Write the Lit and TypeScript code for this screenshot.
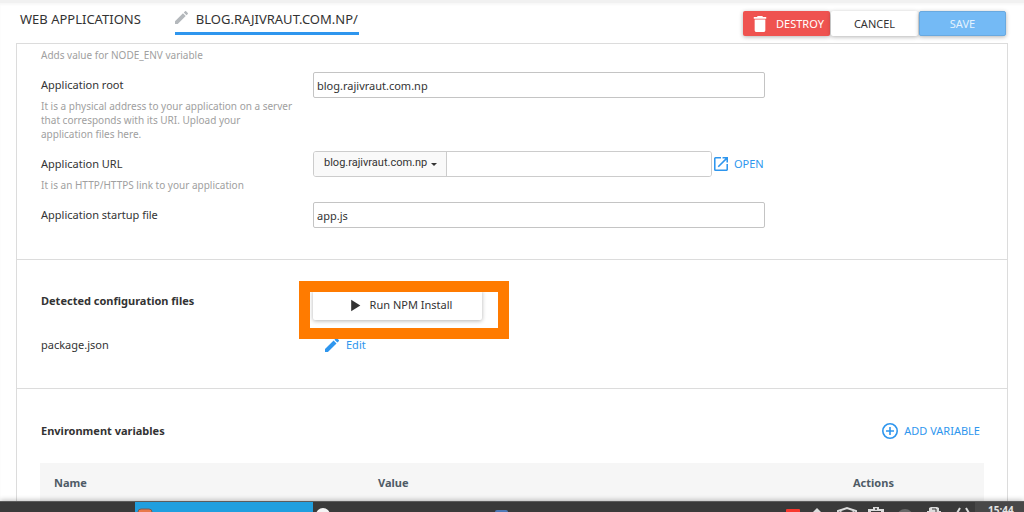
import { LitElement, html, css, svg } from "lit";
import { customElement, state } from "lit/decorators.js";

const PENCIL =
  "M3 17.25V21h3.75L17.81 9.94l-3.75-3.75L3 17.25zM20.71 7.04a1 1 0 0 0 0-1.41l-2.34-2.34a1 1 0 0 0-1.41 0l-1.83 1.83 3.75 3.75 1.83-1.83z";
const TRASH = "M6 19c0 1.1.9 2 2 2h8c1.1 0 2-.9 2-2V7H6v12zM19 4h-3.5l-1-1h-5l-1 1H5v2h14V4z";
const OPEN =
  "M19 19H5V5h7V3H5a2 2 0 0 0-2 2v14a2 2 0 0 0 2 2h14c1.1 0 2-.9 2-2v-7h-2v7zM14 3v2h3.59l-9.83 9.83 1.41 1.41L19 6.41V10h2V3h-7z";
const PLAY = "M8 5v14l11-7z";
const PLUS =
  "M13 7h-2v4H7v2h4v4h2v-4h4v-2h-4V7zm-1-5a10 10 0 1 0 0 20 10 10 0 0 0 0-20zm0 18a8 8 0 1 1 0-16 8 8 0 0 1 0 16z";

const icon = (path: string, cls: string) =>
  html`<svg class="icon ${cls}" viewBox="3 3 18 18" aria-hidden="true"><path d=${path}></path></svg>`;

@customElement("app-taskbar")
export class AppTaskbar extends LitElement {
  static styles = css`
    :host {
      display: flex;
      justify-content: space-between;
      height: 11px;
      overflow: hidden;
      background: #3a3a3a;
      border-top: 1px solid #5c5c5c;
      box-sizing: border-box;
      box-shadow: 0 -1px 5px rgba(0, 0, 0, 0.25);
      position: relative;
      font-family: "Noto Sans", sans-serif;
    }
    .tasks,
    .tray,
    .status {
      display: flex;
      align-items: flex-start;
    }
    .tasks {
      padding-left: 135px;
    }
    .task {
      box-sizing: border-box;
      width: 178px;
      height: 24px;
      padding: 6px 2px 0;
    }
    .active {
      background: #209fdf;
    }
    .glyph {
      display: block;
      width: 16px;
      height: 16px;
      overflow: visible;
    }
    .status {
      gap: 13px;
      padding: 5px 4px 0 0;
    }
    .clock {
      box-sizing: border-box;
      width: 49px;
      padding-left: 13px;
      background: #484848;
      color: #e4e4e4;
      font-size: 10px;
      line-height: 16px;
      font-weight: 700;
    }
  `;

  private glyph(shape: unknown) {
    return html`<svg class="glyph" viewBox="0 0 16 16" aria-hidden="true">${shape}</svg>`;
  }

  render() {
    return html`
      <div class="tasks">
        <div class="task active">
          ${this.glyph(svg`<rect x="1" y="1" width="14" height="14" rx="3" fill="#e8794a" stroke="#7b5a50"></rect>`)}
        </div>
        <div class="task">${this.glyph(svg`<circle cx="8" cy="7" r="7" fill="#f4f4f4"></circle>`)}</div>
        <div class="task">${this.glyph(svg`<rect x="2" y="2" width="13" height="12" rx="2" fill="#4f78b5"></rect>`)}</div>
      </div>
      <div class="tray">
        <div class="status">
          ${this.glyph(svg`<rect x="5" y="2" width="14" height="12" rx="1" fill="#f8382e"></rect>`)}
          ${this.glyph(svg`<path d="M7 1l5 5H2z" fill="#dcdcdc"></path>`)}
          ${this.glyph(svg`<path d="M-1 4l9-3 9 3v5l-9 5-9-5z M1 5l7 3 7-3" fill="none" stroke="#dcdcdc" stroke-width="2"></path>`)}
          ${this.glyph(svg`<path d="M0 2h5V0h6v2h5v11H0z" fill="#dcdcdc"></path><circle cx="8" cy="2" r="1" fill="#3a3a3a"></circle><path d="M3 4.500h10" stroke="#3a3a3a"></path>`)}
          ${this.glyph(svg`<circle cx="8" cy="10" r="8" fill="#686868"></circle>`)}
          ${this.glyph(svg`<path d="M3 4V1l2-1h6l2 1v3h2v8H1V4z" fill="#dcdcdc"></path><path d="M6 2h4v3" stroke="#3a3a3a" fill="none"></path>`)}
          ${this.glyph(svg`<path d="M5 1L2 6l3 4M11 1l3 5-3 4" fill="none" stroke="#dcdcdc" stroke-width="2"></path>`)}
        </div>
        <time class="clock">15:44</time>
      </div>
    `;
  }
}

@customElement("app-root")
export class AppRoot extends LitElement {
  @state() private root = "blog.rajivraut.com.np";
  @state() private startup = "app.js";

  static styles = css`
    :host {
      display: flex;
      flex-direction: column;
      height: 100vh;
      overflow: hidden;
      background: #fff;
      color: #333;
      font-family: "Noto Sans", sans-serif;
      font-size: 11px;
      line-height: 20px;
    }
    * {
      box-sizing: border-box;
    }
    .page {
      flex: 1;
      min-height: 0;
      overflow: hidden;
      padding: 0 16px;
      border-top: 3px solid #f1f1f1;
      box-shadow: inset 0 2px 2px #f8f8f8;
    }
    .header {
      display: flex;
      justify-content: space-between;
      height: 40px;
      padding: 7px 2px 0 4px;
    }
    .tabs {
      display: flex;
      gap: 31px;
    }
    .tab {
      display: flex;
      height: 25px;
      padding-right: 3px;
      color: #333;
      font-size: 13px;
      line-height: 18px;
      text-decoration: none;
    }
    .tab.current {
      gap: 8px;
      padding-right: 1px;
      border-bottom: 3px solid #2e96ee;
    }
    .icon {
      flex: none;
      width: 13px;
      height: 13px;
      fill: currentColor;
    }
    .muted {
      color: #b4b8bc;
      margin-top: 1px;
    }
    .buttons {
      display: flex;
      gap: 1px;
      padding-top: 1px;
    }
    button,
    select,
    input {
      margin: 0;
      font: inherit;
      color: inherit;
    }
    .button {
      display: flex;
      align-items: center;
      justify-content: center;
      width: 87px;
      height: 25px;
      padding: 0;
      border: 0;
      border-radius: 2px;
      background: #fff;
      font-size: 11px;
      box-shadow: 0 1px 4px rgba(0, 0, 0, 0.3);
    }
    .danger {
      gap: 8px;
      padding-left: 3px;
      background: #ef5350;
      color: #fff;
    }
    .primary {
      background: #74baf5;
      color: #e4f2fe;
      border: 1px solid #69a9df;
    }
    .bin {
      width: 16px;
      height: 16px;
    }
    .panel {
      border: 1px solid #dcdcdc;
      height: 100%;
    }
    .section {
      padding: 0 24px;
      border-bottom: 1px solid #dcdcdc;
    }
    .form {
      display: grid;
      gap: 10px;
      padding-top: 4px;
      padding-bottom: 31px;
    }
    .row {
      display: grid;
      grid-template-columns: 252px 1fr;
      column-gap: 20px;
      align-items: start;
    }
    .label {
      display: block;
      padding-top: 3px;
    }
    .hint {
      margin: 0;
      color: #a0a0a0;
      font-size: 10px;
      line-height: 14px;
    }
    .label + .hint {
      margin-top: 4px;
    }
    .input {
      display: block;
      width: 100%;
      max-width: 452px;
      height: 26px;
      padding: 0 3px;
      border: 1px solid #c4c4c4;
      border-radius: 2px;
      background: #fff;
      font-size: 11px;
    }
    .url {
      display: flex;
      align-items: center;
    }
    .group {
      display: flex;
      flex: 0 1 399px;
      height: 26px;
      border: 1px solid #ccc;
      border-radius: 3px;
      overflow: hidden;
    }
    .picker {
      display: grid;
      width: 133px;
      border-right: 1px solid #ccc;
      background: #f9f9f9;
    }
    .domain,
    .caret {
      grid-area: 1 / 1;
    }
    .domain {
      appearance: none;
      padding: 0 10px 2px;
      border: 0;
      background: none;
      font-family: Roboto, sans-serif;
      font-size: 11px;
    }
    .caret {
      justify-self: end;
      align-self: center;
      width: 6px;
      height: 3px;
      margin-right: 9px;
      pointer-events: none;
    }
    .path {
      flex: 1;
      min-width: 0;
      border: 0;
      padding: 0 4px;
      background: #fff;
    }
    .link {
      display: flex;
      align-items: center;
      gap: 6px;
      padding: 0;
      border: 0;
      background: none;
      color: #2e96ee;
      font-size: 11px;
      text-decoration: none;
    }
    .open {
      margin-left: 2px;
    }
    .launch {
      width: 14px;
      height: 14px;
    }
    .title {
      margin: 0;
      font-size: 11px;
      line-height: 20px;
      font-weight: 700;
    }
    .config {
      display: grid;
      gap: 15px;
      padding-top: 30px;
      padding-bottom: 33px;
    }
    .config .title {
      padding-top: 1px;
    }
    .marked {
      position: relative;
      justify-self: start;
      width: 169px;
    }
    .frame {
      position: absolute;
      inset: -9px -27px -19px -14px;
      border: 11px solid #ff7b00;
      pointer-events: none;
    }
    .run {
      width: 100%;
      height: 30px;
      gap: 8px;
      padding-left: 4px;
    }
    .play {
      width: 15px;
      height: 15px;
    }
    .edit {
      justify-self: start;
      gap: 7px;
      padding-left: 12px;
    }
    .environment {
      border-bottom: 0;
      padding-top: 32px;
    }
    .bar {
      display: flex;
      justify-content: space-between;
      align-items: center;
      padding: 0 3px 0 0;
    }
    .add {
      width: 16px;
      height: 16px;
    }
    .table {
      width: calc(100% + 2px);
      margin: 22px -1px 0;
      border-collapse: collapse;
      table-layout: fixed;
      background: #f6f6f6;
    }
    .cell {
      height: 40px;
      padding: 0 14px;
      text-align: left;
      color: #4f5b66;
    }
    .wide {
      width: 324px;
    }
    .last {
      width: 145px;
    }
  `;

  render() {
    return html`
      <main class="page">
        <header class="header">
          <nav class="tabs">
            <a class="tab" href="#applications">WEB APPLICATIONS</a>
            <a class="tab current" href="#blog">${icon(PENCIL, "muted")}BLOG.RAJIVRAUT.COM.NP/</a>
          </nav>
          <div class="buttons">
            <button class="button danger">${icon(TRASH, "bin")}DESTROY</button>
            <button class="button">CANCEL</button>
            <button class="button primary">SAVE</button>
          </div>
        </header>
        <div class="panel">
          <section class="section form">
            <p class="hint">Adds value for NODE_ENV variable</p>
            <div class="row">
              <div>
                <label class="label" for="root">Application root</label>
                <p class="hint">
                  It is a physical address to your application on a server that corresponds with its URI. Upload your
                  application files here.
                </p>
              </div>
              <input class="input" id="root" .value=${this.root} />
            </div>
            <div class="row">
              <div>
                <label class="label" for="path">Application URL</label>
                <p class="hint">It is an HTTP/HTTPS link to your application</p>
              </div>
              <div class="url">
                <div class="group">
                  <div class="picker">
                    <select class="domain" aria-label="Domain">
                      <option>blog.rajivraut.com.np</option>
                    </select>
                    <svg class="caret" viewBox="0 0 6 3" aria-hidden="true"><path d="M0 0h6L3 3z" fill="#333"></path></svg>
                  </div>
                  <input class="path" id="path" />
                </div>
                <a class="link open" href="#open">${icon(OPEN, "launch")}OPEN</a>
              </div>
            </div>
            <div class="row">
              <label class="label" for="startup">Application startup file</label>
              <input class="input" id="startup" .value=${this.startup} />
            </div>
          </section>
          <section class="section config">
            <div class="row">
              <h2 class="title">Detected configuration files</h2>
              <div class="marked">
                <button class="button run">${icon(PLAY, "play")}Run NPM Install</button>
                <div class="frame"></div>
              </div>
            </div>
            <div class="row">
              <span>package.json</span>
              <button class="link edit">${icon(PENCIL, "launch")}Edit</button>
            </div>
          </section>
          <section class="section environment">
            <div class="bar">
              <h2 class="title">Environment variables</h2>
              <button class="link">
                <svg class="icon add" viewBox="2 2 20 20" aria-hidden="true"><path d=${PLUS}></path></svg>ADD VARIABLE
              </button>
            </div>
            <table class="table">
              <thead>
                <tr>
                  <th class="cell wide">Name</th>
                  <th class="cell">Value</th>
                  <th class="cell last">Actions</th>
                </tr>
              </thead>
            </table>
          </section>
        </div>
      </main>
      <app-taskbar></app-taskbar>
    `;
  }
}
